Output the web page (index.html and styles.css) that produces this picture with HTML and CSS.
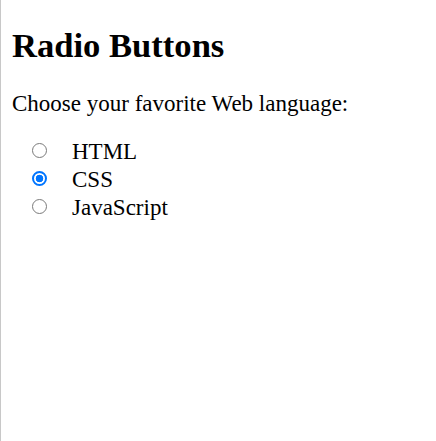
FILE: index.html
```html
<!DOCTYPE html>
<html>
<head>
<meta charset="utf-8">
<link rel="stylesheet" href="styles.css">
</head>
<body>
<h2 class="title">Radio Buttons</h2>
<p class="intro">Choose your favorite Web language:</p>
<form class="choices">
  <div class="choice"><input type="radio" id="html" name="lang" value="HTML"><label for="html">HTML</label></div>
  <div class="choice"><input type="radio" id="css" name="lang" value="CSS" checked><label for="css">CSS</label></div>
  <div class="choice"><input type="radio" id="js" name="lang" value="JavaScript"><label for="js">JavaScript</label></div>
</form>
</body>
</html>
```
FILE: styles.css
```css
html {
  background: #fff;
}
body {
  box-sizing: border-box;
  margin: 0;
  min-height: 100vh;
  padding: 1px 11px 0 11px;
  border-left: 1px solid #c8c8c8;
  font-family: "Liberation Serif", "Times New Roman", serif;
  font-size: 23px;
  color: #000;
}
.title {
  font-size: 34.6px;
  font-weight: bold;
  margin: 25px 0 26px;
}
.intro {
  margin: 0 0 21px;
}
.choices {
  display: flex;
  flex-direction: column;
  padding-left: 20px;
}
.choice {
  display: flex;
  align-items: center;
  height: 28px;
}
.choice input {
  appearance: none;
  -webkit-appearance: none;
  box-sizing: border-box;
  width: 15px;
  height: 15px;
  margin: -4px 25px 0 0;
  border: 1.5px solid #7a7a7a;
  border-radius: 50%;
  background: #fff;
  flex: none;
}
.choice input:checked {
  border: 2px solid #0075ff;
  background: radial-gradient(circle, #0075ff 0 3.5px, #fff 4.1px);
}
```
